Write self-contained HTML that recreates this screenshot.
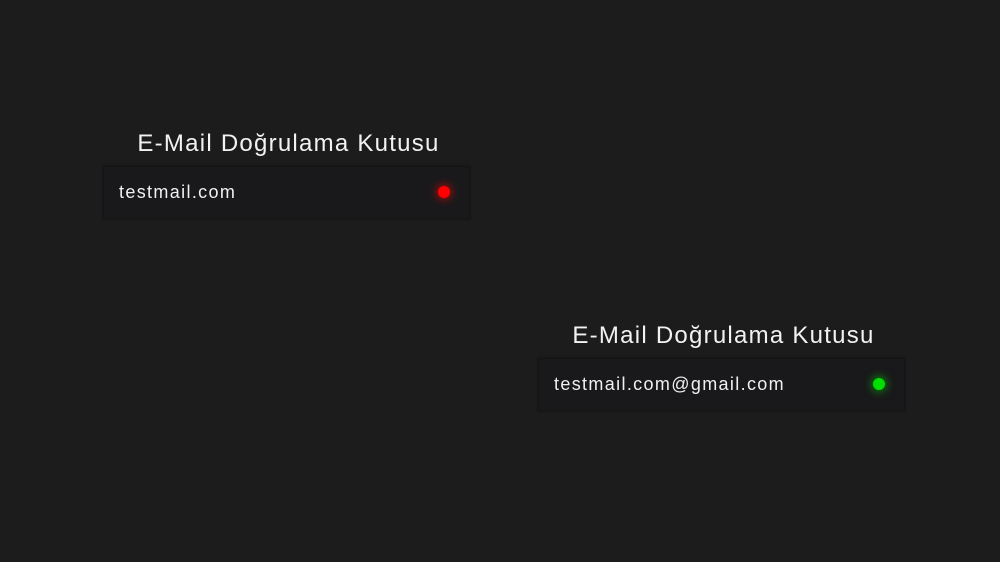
<!DOCTYPE html>
<html><head><style>
body{margin:0;width:1000px;height:562px;background:#1c1c1c;font-family:"Liberation Sans",sans-serif;position:relative;overflow:hidden}
.t{position:absolute;width:367px;text-align:center;color:#f2f2f2;font-size:24px;letter-spacing:1.25px}
.b{position:absolute;width:365px;height:51px;background:#19191b;border:1px solid #141414;box-shadow:0 0 3px rgba(0,0,0,.4)}
.b span{position:absolute;left:15px;top:15px;color:#f0f0f0;font-size:18px;letter-spacing:1.35px}
.d{position:absolute;right:19px;top:19px;width:12px;height:12px;border-radius:50%}
</style></head><body>
<div class="t" style="left:105px;top:130px">E-Mail Doğrulama Kutusu</div>
<div class="b" style="left:103px;top:166px"><span>testmail.com</span><div class="d" style="background:#ff0000;box-shadow:0 0 8px 2px rgba(255,0,0,.55)"></div></div>
<div class="t" style="left:540px;top:322px">E-Mail Doğrulama Kutusu</div>
<div class="b" style="left:538px;top:358px"><span>testmail.com@gmail.com</span><div class="d" style="background:#00e000;box-shadow:0 0 8px 2px rgba(0,220,0,.5)"></div></div>
</body></html>
